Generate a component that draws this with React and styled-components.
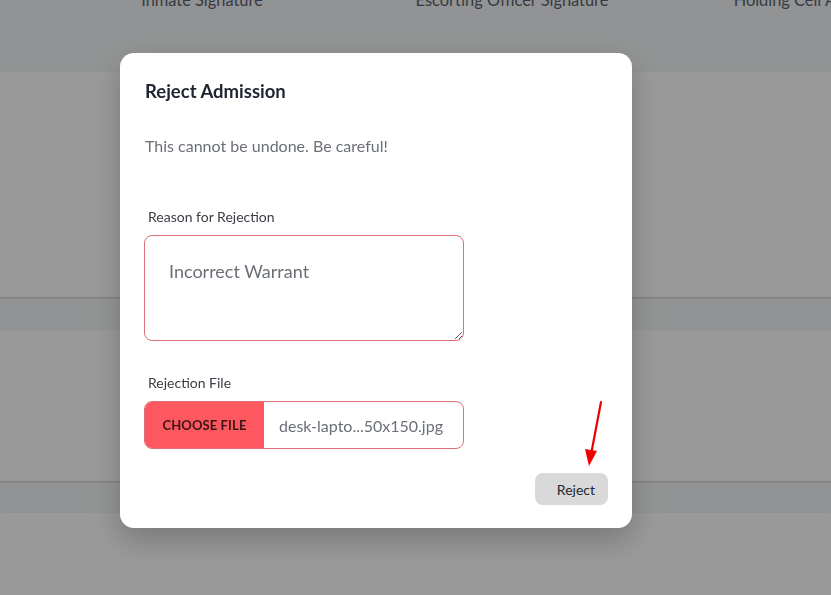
import React from 'react';
import styled, { createGlobalStyle } from 'styled-components';

const GlobalStyle = createGlobalStyle`
  html, body {
    margin: 0;
    padding: 0;
    height: 100%;
    overflow: hidden;
    background: #f4f6f7;
    font-family: Lato, "Noto Sans", "Liberation Sans", sans-serif;
  }
`;

const Page = styled.div`
  display: flex;
  flex-direction: column;
  margin-top: -9px;
`;

const SignatureRow = styled.div`
  display: grid;
  grid-template-columns: 310px 310px 330px;
  padding-left: 47px;
  height: 81px;
`;

const SignatureLabel = styled.div`
  text-align: center;
  font-size: 16.4px;
  line-height: 18px;
  color: #5b6270;
  white-space: nowrap;
`;

const Card = styled.div`
  background: #ffffff;
  height: ${p => p.$h}px;
  margin-bottom: ${p => p.$gap || 0}px;
  box-shadow: 0 1px 2px rgba(0, 0, 0, 0.18);
`;

const Overlay = styled.div`
  position: fixed;
  inset: 0;
  background: rgba(0, 0, 0, 0.4);
  display: flex;
  align-items: flex-start;
  padding: 53px 0 0 120px;
`;

const Modal = styled.div`
  width: 512px;
  box-sizing: border-box;
  background: #ffffff;
  border-radius: 14px;
  padding: 26px 24px 23px 24px;
  box-shadow: 0 12px 30px rgba(0, 0, 0, 0.22);
  display: flex;
  flex-direction: column;
`;

const Title = styled.h2`
  margin: 0 0 0 1px;
  font-size: 18.5px;
  line-height: 24px;
  font-weight: 700;
  color: #1f2430;
`;

const Subtitle = styled.p`
  margin: 32px 0 0 1px;
  font-size: 16px;
  line-height: 22px;
  color: #6b6f76;
`;

const FieldLabel = styled.label`
  display: block;
  margin: ${p => p.$top}px 0 9px 4px;
  font-size: 14px;
  line-height: 18px;
  color: #3a3d44;
`;

const TextArea = styled.textarea`
  width: 320px;
  height: 106px;
  box-sizing: border-box;
  border: 1px solid #df6f76;
  border-radius: 8px;
  padding: 23px 24px;
  font-family: inherit;
  font-size: 18px;
  line-height: 24px;
  color: #6b6f76;
  outline: none;
  display: block;
`;

const FileBox = styled.div`
  width: 320px;
  height: 48px;
  box-sizing: border-box;
  border: 1px solid #df6f76;
  border-radius: 8px;
  overflow: hidden;
  display: flex;
  align-items: stretch;
`;

const ChooseButton = styled.span`
  width: 119px;
  flex: none;
  background: #fd5860;
  display: flex;
  align-items: center;
  justify-content: center;
  font-size: 13px;
  font-weight: 700;
  color: #3a1517;
  letter-spacing: 0.1px;
`;

const FileName = styled.span`
  display: flex;
  align-items: center;
  padding-left: 15px;
  font-size: 16px;
  color: #6b6f76;
`;

const Footer = styled.div`
  display: flex;
  justify-content: flex-end;
  margin-top: 24px;
`;

const RejectButton = styled.button`
  height: 32px;
  padding: 0 13px 0 22px;
  border: none;
  border-radius: 8px;
  background: #d9d9d9;
  font-family: inherit;
  font-size: 14px;
  color: #25282d;
`;

const Arrow = styled.svg`
  position: absolute;
  left: 580px;
  top: 398px;
`;

export default function App() {
  return (
    <>
      <GlobalStyle />
      <Page>
        <SignatureRow>
          <SignatureLabel>Inmate Signature</SignatureLabel>
          <SignatureLabel>Escorting Officer Signature</SignatureLabel>
          <SignatureLabel>Holding Cell Area Signature</SignatureLabel>
        </SignatureRow>
        <Card $h={225} $gap={33} />
        <Card $h={151} $gap={32} />
        <Card $h={120} />
      </Page>
      <Overlay>
        <Modal>
          <Title>Reject Admission</Title>
          <Subtitle>This cannot be undone. Be careful!</Subtitle>
          <FieldLabel $top={51}>Reason for Rejection</FieldLabel>
          <TextArea defaultValue="Incorrect Warrant" />
          <FieldLabel $top={33}>Rejection File</FieldLabel>
          <FileBox>
            <ChooseButton>CHOOSE FILE</ChooseButton>
            <FileName>desk-lapto...50x150.jpg</FileName>
          </FileBox>
          <Footer>
            <RejectButton>Reject</RejectButton>
          </Footer>
        </Modal>
        <Arrow width="30" height="75" viewBox="0 0 30 75">
          <line x1="21" y1="4" x2="11.5" y2="54" stroke="#ee0000" strokeWidth="2.2" strokeLinecap="round" />
          <polygon points="9,68 5,51 17,53" fill="#ee0000" />
        </Arrow>
      </Overlay>
    </>
  );
}
